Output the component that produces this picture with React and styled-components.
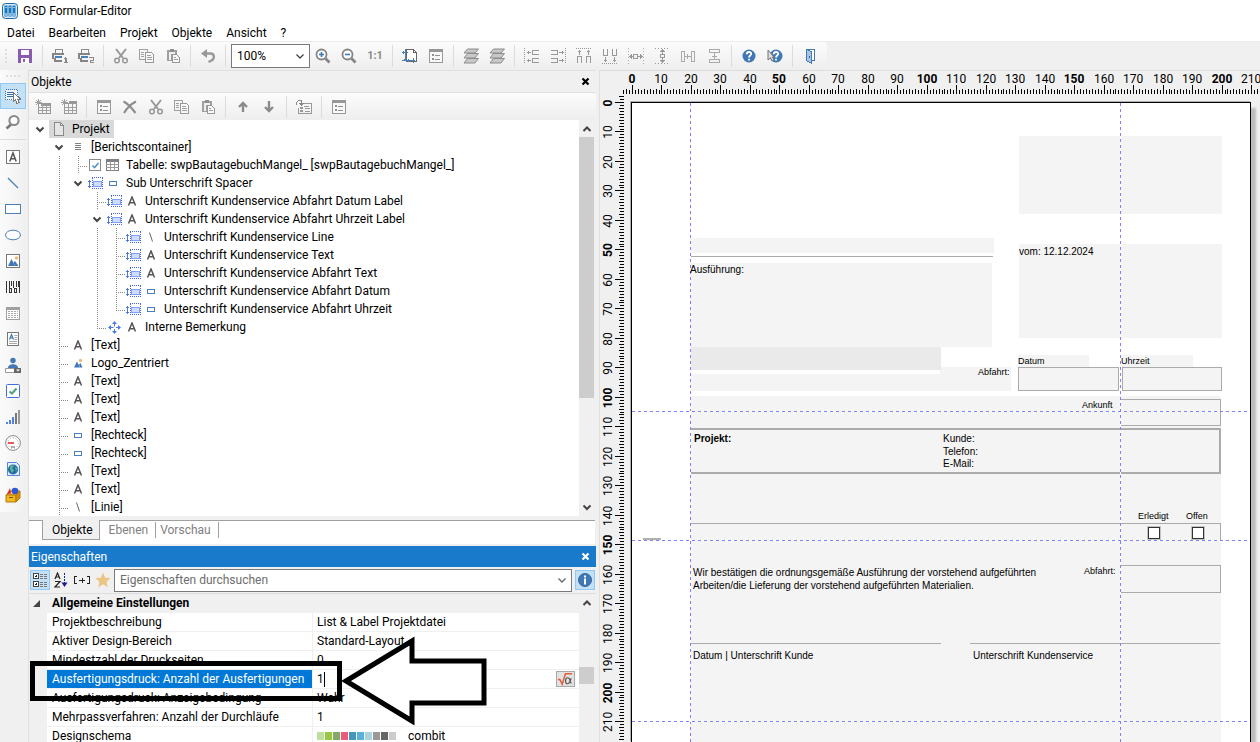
import React from 'react';
import styled, { createGlobalStyle } from 'styled-components';

const GlobalStyle = createGlobalStyle`
  * { box-sizing: border-box; }
  body {
    margin: 0;
    background: #f0f0f0;
    color: #000;
    font-family: "Segoe UI", Roboto, sans-serif;
    font-size: 12px;
    line-height: 18px;
  }
  button, input, select { font: inherit; color: inherit; }
`;

/* ---------- icons ---------- */

const Svg = ({ w = 16, h = 16, crisp = true, children }) => (
  <svg
    width={w}
    height={h}
    viewBox={`0 0 ${w} ${h}`}
    fill="none"
    shapeRendering={crisp ? 'crispEdges' : 'auto'}
    aria-hidden="true"
  >
    {children}
  </svg>
);

const Logo = () => (
  <Svg crisp={false}>
    <rect x=".5" y=".5" width="15" height="15" rx="3" fill="#d8ecf8" stroke="#1c6aa8" />
    <path d="M2.5 2.5h3v11h-3zM6.5 2.5h3v11h-3zM10.500 2.500h3v11h-3z" fill="#1676bd" />
    <path d="M4 4v1M8 4v1M12 4v1M4 10v3M8 10v3M12 10v3" stroke="#fff" />
  </Svg>
);
const Save = () => (
  <Svg>
    <path d="M1 1h14v14H1z" fill="#8a5bb0" />
    <path d="M4 2h8v5H4zM4 10h8v5H4z" fill="#fff" />
    <path d="M6 11h2v3H6z" fill="#8a5bb0" />
  </Svg>
);
const Printer = ({ n }) => (
  <Svg w={18}>
    <path d="M4.500 5V1.500h7V5" stroke="#8a8a8a" />
    <path d="M1 5h12v2H1zM1 7h2v4H1zM4 12h7v2H4zM3 10h2v4H3z" fill="#858585" />
    <path d="M4 8h7v2H4z" fill="#4a7fb8" />
    {n === 1 ? (
      <path d="M13 10h2v4M13 14.500h4M14.500 9v5" stroke="#8a8a8a" />
    ) : (
      <path d="M12 9.500h4v2.500H13.500v2.500H17" stroke="#8a8a8a" />
    )}
  </Svg>
);
const Cut = () => (
  <Svg crisp={false}>
    <path d="M3 1l7 9M13 1L6 10" stroke="#989898" strokeWidth="2" />
    <circle cx="4" cy="12.500" r="2.300" stroke="#989898" strokeWidth="1.500" />
    <circle cx="12" cy="12.500" r="2.300" stroke="#989898" strokeWidth="1.500" />
  </Svg>
);
const Copy = () => (
  <Svg>
    <path d="M6 11.500H.5V1.500h8V4" stroke="#a0a0a0" />
    <path d="M2 4.500h3M2 6.500h3M2 8.500h3" stroke="#a0a0a0" />
    <path d="M6.500 4.500h6l2 2v8h-8z" fill="#f8f8f8" stroke="#989898" />
    <path d="M8 7.500h4M8 9.500h5M8 11.500h5" stroke="#a0a0a0" />
  </Svg>
);
const Paste = () => (
  <Svg>
    <path d="M2 2h10v4H7v7H2z" fill="#a0a0a0" />
    <path d="M4 4h6v2H6v6H4z" fill="#f0f0f0" />
    <path d="M5 1h4v3H5z" fill="#909090" />
    <path d="M7.500 6.500h4l3 3v5h-7z" fill="#f8f8f8" stroke="#989898" />
    <path d="M9 9.500h2M9 11.500h4" stroke="#a0a0a0" />
  </Svg>
);
const Undo = () => (
  <Svg crisp={false}>
    <path d="M3 5.500h7.500c4 0 5 5.500 0 7.500l-2 1" stroke="#989898" strokeWidth="2.300" />
    <path d="M1 5.500L7 1v9z" fill="#989898" />
  </Svg>
);
const Magnify = ({ plus }) => (
  <Svg crisp={false}>
    <path d="M10.500 10.500L14.500 14.500" stroke="#858585" strokeWidth="2.800" />
    <circle cx="6.500" cy="6.500" r="5" fill="#fff" stroke="#858585" strokeWidth="1.800" />
    <path d="M4 6.500h5" stroke="#3f7ab8" strokeWidth="1.600" />
    {plus && <path d="M6.500 4v5" stroke="#3f7ab8" strokeWidth="1.600" />}
  </Svg>
);
const PageSize = () => (
  <Svg>
    <path d="M4.500 1.500h7l3 3v9h-10z" stroke="#666" fill="#fff" />
    <path d="M11.500 1.500v3h3" stroke="#666" />
    <path d="M0 4.500h6M3.500 1v12M1.500 3v3M0 12.500h13M11.500 10v5M6.500 11v3M2 11.500h3" stroke="#4a7fb8" />
  </Svg>
);
const Form = () => (
  <Svg>
    <path d="M1.500 1.500h13v13h-13z" fill="#f8f8f8" stroke="#989898" />
    <path d="M1 1h14v3H1z" fill="#989898" />
    <path d="M4 6h2v2H4zM4 10h2v2H4z" fill="#909090" />
    <path d="M7 7.500h5M7 11.500h5" stroke="#909090" />
  </Svg>
);
const Layers = () => (
  <Svg crisp={false}>
    <path d="M4.500 10.500h11L12 15H1zM4.500 5.500h11L12 10H1z" fill="#c8c8c8" stroke="#8c8c8c" />
    <path d="M4.500 1h11L12 5H1z" fill="#c8c8c8" stroke="#8c8c8c" />
  </Svg>
);
const dot = { stroke: '#999', strokeDasharray: '1 1' };
const AlignLeft = () => (
  <Svg>
    <path d="M.5 0v16" {...dot} />
    <path d="M15 2.500H8.500v4H15M15 10.500H8.500v4H15M3 4.500h4M3 12.500h4M4.500 3v3M4.500 11v3" stroke="#999" />
  </Svg>
);
const AlignRight = () => (
  <Svg>
    <path d="M15.500 0v16" {...dot} />
    <path d="M1 2.500h6.500v4H1M1 10.500h6.500v4H1M9 4.500h5M9 12.500h5M12.500 3v3M12.500 11v3" stroke="#999" />
  </Svg>
);
const AlignTop = () => (
  <Svg>
    <path d="M0 .5h16" {...dot} />
    <path d="M1.500 15V8.500h4V15M10.500 15V8.500h4V15M3.500 2v5M12.500 2v5M2 3.500h3M11 3.500h3" stroke="#999" />
  </Svg>
);
const AlignBottom = () => (
  <Svg>
    <path d="M0 15.500h16" {...dot} />
    <path d="M1.500 1v6.500h4V1M10.500 1v6.500h4V1M3.500 9v5M12.500 9v5M2 12.500h3M11 12.500h3" stroke="#999" />
  </Svg>
);
const SameWidth = () => (
  <Svg>
    <path d="M.5 0v16M15.500 0v16" stroke="#aaa" strokeDasharray="1 2" />
    <path d="M5.500 6.500h4v4h-4zM1 8.500h4M10 8.500h5M3.500 6v5M2.500 7v3M12.500 6v5M13.500 7v3" stroke="#999" />
  </Svg>
);
const SameHeight = () => (
  <Svg>
    <path d="M1 .5h14M1 15.500h14" stroke="#999" strokeDasharray="1 2" />
    <path d="M6.500 6.500h4v3h-4zM8.500 1v5M8.500 10v5M6 3.500h5M7 2.500h3M6 12.500h5M7 13.500h3" stroke="#999" />
  </Svg>
);
const SpaceH = () => (
  <Svg>
    <path d="M1.500 3.500h3v10h-3zM11.500 3.500h3v10h-3zM5 8.500h6M7.500 6v5" stroke="#aaa" />
  </Svg>
);
const SpaceV = () => (
  <Svg>
    <path d="M3.500 1.500h10v3h-10zM3.500 11.500h10v3h-10zM8.500 5v6M6 8.500h5" stroke="#aaa" />
  </Svg>
);
const Help = ({ pointer }) => (
  <Svg crisp={false}>
    <circle cx={pointer ? 9 : 8} cy="8" r="6.500" fill="#3f78b5" />
    <path
      transform={pointer ? 'translate(1 0)' : undefined}
      d="M5.800 6.200c0-3 4.600-2.800 4.400-.3C10.100 7.500 8 7.500 8 9.500M8 10.800v1.800"
      stroke="#fff"
      strokeWidth="1.800"
    />
    {pointer && <path d="M1 2v10l2.500-2.200L5 13l2-1-1.600-3H7z" fill="#ddd" stroke="#777" />}
  </Svg>
);
const Door = () => (
  <Svg>
    <path d="M4.500 1.500h8v11H10" stroke="#3f78b5" fill="#fff" />
    <path d="M4.500 1.500l5 2v12l-5-3z" fill="#a9c4e2" stroke="#3f78b5" />
    <path d="M7 8h1v2H7z" fill="#2d5f98" />
  </Svg>
);
const NewTable = ({ wide }) => (
  <Svg>
    <path d="M3.500 0v7M0 3.500h7M1 1l5 5M6 1L1 6" stroke="#a0a0a0" />
    <path d="M3 4.500h12v10H3z" fill="#f4f4f4" stroke="#989898" />
    <path d={wide ? 'M8 2h8v3H8z' : 'M6 4h9v3H6z'} fill="#989898" />
    <path d="M3 8.500h12M3 11.500h12M7.500 5v10M11.500 5v10" stroke="#a0a0a0" />
  </Svg>
);
const Delete = () => (
  <Svg crisp={false}>
    <path d="M1.500 2.500c4 2 8 6 12 11.500M14 2.500C9 5 5 9 2 14" stroke="#8e8e8e" strokeWidth="2.200" />
  </Svg>
);
const Arrow = ({ down }) => (
  <Svg crisp={false}>
    <path
      d={down ? 'M8 2v9M4 8l4 4 4-4' : 'M8 13V4M4 8l4-4 4 4'}
      stroke="#8a8a8a"
      strokeWidth="2.400"
    />
  </Svg>
);
const Jump = () => (
  <Svg>
    <path d="M7 4.500h8.500v10h-13V9" stroke="#999" />
    <path d="M.5 6V3.500l2-2h3v2M3 4h5M4 5h3M5 6h1" stroke="#888" />
    <path d="M4 8h3v2H4zM4 11h3v2H4z" fill="#999" />
    <path d="M8 7.500h5M9 9.500h5M9 12.500h5" stroke="#999" />
  </Svg>
);

/* palette */
const SelectTool = () => (
  <Svg>
    <path d="M.5 1.500h12v10H.5z" stroke="#3a70b0" strokeDasharray="1 1" fill="#eef5fc" />
    <path d="M2 4.500h7M2 6.500h6M2 8.500h6" stroke="#3a70b0" />
    <path d="M8.500 4.500v9l2-2 1.500 4 2-1-1.500-3.500h3z" fill="#fff" stroke="#777" />
  </Svg>
);
const Lens = () => (
  <Svg crisp={false}>
    <path d="M6 10.500L1.500 14.500" stroke="#777" strokeWidth="2.600" />
    <circle cx="9" cy="6.500" r="4.600" fill="#fff" stroke="#888" strokeWidth="2" />
  </Svg>
);
const TextTool = () => (
  <Svg crisp={false}>
    <rect x="1.500" y="1.500" width="13" height="13" fill="#fff" stroke="#777" />
    <path d="M4.800 12.500L8 4l3.200 8.500M6 9.800h4" stroke="#555" strokeWidth="1.500" />
  </Svg>
);
const LineTool = () => (
  <Svg crisp={false}>
    <path d="M3 3l10 10" stroke="#4a7fb8" strokeWidth="1.300" />
  </Svg>
);
const RectTool = () => (
  <Svg>
    <path d="M.5 3.500h15v9H.5z" stroke="#4a7fb8" fill="#fff" />
  </Svg>
);
const OvalTool = () => (
  <Svg crisp={false}>
    <ellipse cx="8" cy="8" rx="7.500" ry="4.800" stroke="#4a7fb8" fill="#fff" />
  </Svg>
);
const Mountains = () => (
  <>
    <path d="M3 13l3.500-7L10 13z" fill="#3f78b5" />
    <path d="M8.500 9.500L10 8l3.500 5H10z" fill="#3f78b5" />
    <circle cx="11.500" cy="5" r="1.800" fill="#efbb78" />
  </>
);
const ImageTool = () => (
  <Svg crisp={false}>
    <rect x="1.500" y="1.500" width="13" height="13" fill="#fff" stroke="#777" />
    <Mountains />
  </Svg>
);
const Barcode = () => (
  <Svg>
    <path d="M1.500 2v12M4 2v8M8.500 2v7M11.500 2v6M14.500 2v12" stroke="#333" />
    <path d="M6 2h1v5H6zM12.500 2h1v6h-1z" fill="#333" />
    <path d="M4.500 9.500h2v4h-2zM9.500 9.500h2v4h-2z" stroke="#333" />
  </Svg>
);
const TableTool = () => (
  <Svg>
    <path d="M1.500 2.500h13v12h-13z" fill="#fff" stroke="#a0a0a0" />
    <path d="M1 2h14v3H1z" fill="#a0a0a0" />
    <path d="M3 6.500h10M3 8.500h10M3 10.500h10M3 12.500h10" stroke="#aaa" strokeDasharray="2 1" />
  </Svg>
);
const RichText = () => (
  <Svg crisp={false}>
    <rect x="2.500" y="1.500" width="11" height="13" fill="#fff" stroke="#777" />
    <path d="M4.500 8.500L6.500 3.500l2 5M5.200 7h2.600" stroke="#3f78b5" strokeWidth="1.200" />
    <path d="M9.500 4.500h3M9.500 6.500h3M9.500 8.500h3M4 10.500h8M4 12.500h8" stroke="#aaa" />
  </Svg>
);
const FormTool = () => (
  <Svg crisp={false}>
    <circle cx="8" cy="3.500" r="2.700" fill="#3f78b5" />
    <path d="M3 11c0-5 10-5 10 0z" fill="#3f78b5" />
    <path d="M.5 11.500h9v4h-9z" fill="#fff" stroke="#999" />
    <path d="M9 11h7v5H9z" fill="#666" />
    <path d="M11 12.500h4l-2 2z" fill="#fff" />
  </Svg>
);
const CheckTool = () => (
  <Svg crisp={false}>
    <rect x="1.500" y="1.500" width="13" height="13" rx="1" fill="#fff" stroke="#3f70e8" />
    <path d="M4.500 8.500L7 10.500l4.500-5" stroke="#55a088" strokeWidth="2.200" />
  </Svg>
);
const Bars = () => (
  <Svg>
    <path d="M1 13h2v2H1zM4 11h2v4H4zM7 8h2v7H7z" fill="#4f7fe8" />
    <path d="M10 4h2v11h-2z" fill="#777" />
    <path d="M13 1h2v14h-2z" fill="#999" />
  </Svg>
);
const Gauge = () => (
  <Svg crisp={false}>
    <circle cx="8" cy="8" r="7.400" fill="#fff" stroke="#8a8a8a" />
    <circle cx="8" cy="8" r="5.300" stroke="#999" strokeDasharray="1 2" />
    <path d="M3 8h6" stroke="#e02020" strokeWidth="1.500" />
    <path d="M6 12h4" stroke="#666" />
  </Svg>
);
const Globe = () => (
  <Svg crisp={false}>
    <path d="M2.500 1.500h9l3 3v10h-12z" fill="#e4edff" stroke="#5585e0" />
    <circle cx="8" cy="8.500" r="5" fill="#2369a8" />
    <path d="M5 5.500c2-2 4-1 4 0L7 7l2 2-1.500 3C6 11 4.500 8.500 5 5.500zM10 6l2.500 1L11 11z" fill="#58b58e" />
  </Svg>
);
const Box3d = () => (
  <Svg crisp={false}>
    <path d="M1 8l4-4h10l-4 4z" fill="#f7d468" stroke="#b07a10" />
    <path d="M6 6.500L2 7l3-6z" fill="#e02828" />
    <circle cx="10" cy="4" r="3.300" fill="#2f55d8" />
    <path d="M1 8h10v7H1z" fill="#f2b81c" stroke="#b07a10" />
    <path d="M11 8l4-4v7l-4 4z" fill="#d4920c" stroke="#b07a10" />
    <path d="M4 10.500h4" stroke="#7a5200" />
  </Svg>
);

/* tree */
const DocIcon = () => (
  <Svg h={14}>
    <path d="M3.500.5h6l3 3v10h-9z" fill="#e6e6e6" stroke="#8a8a8a" />
    <path d="M9.500.5v3h3" stroke="#8a8a8a" />
  </Svg>
);
const ListIcon = () => (
  <Svg w={10} h={10}>
    <path d="M2 1.500h6M2 3.500h6M2 5.500h6M2 7.500h6" stroke="#808080" />
  </Svg>
);
const GridIcon = () => (
  <Svg w={13} h={12}>
    <path d="M.5.5h12v11H.5z" fill="#fff" stroke="#808080" />
    <path d="M0 0h13v3H0z" fill="#808080" />
    <path d="M0 5.500h13M0 8.500h13M4.500 2v10M8.500 2v10" stroke="#999" />
  </Svg>
);
const LetterIcon = () => (
  <Svg w={10} h={10} crisp={false}>
    <path d="M1.500 9.500L5 1l3.500 8.500M2.800 6.800h4.400" stroke="#555" strokeWidth="1.500" />
  </Svg>
);
const StrokeIcon = () => (
  <Svg w={10} h={10} crisp={false}>
    <path d="M3.500.5l3 9" stroke="#666" />
  </Svg>
);
const BoxIcon = () => (
  <Svg w={10} h={10}>
    <path d="M1.500 3.500h7v4h-7z" fill="#fff" stroke="#4a7fb8" />
  </Svg>
);
const PicIcon = () => (
  <Svg w={10} h={10} crisp={false}>
    <path d="M1 9.500L4 3.500l3 6z" fill="#3f78b5" />
    <path d="M6 6.500L7.500 5l2 4.500H7z" fill="#3f78b5" />
    <circle cx="7.500" cy="2.500" r="1.700" fill="#efbb78" />
  </Svg>
);
const LinkedIcon = () => (
  <Svg w={15} h={12}>
    <path d="M1.500 3v8M0 4.500h3M0 9.500h3" stroke="#4f78d8" />
    <path d="M4.500 1v10M14.500 1v10M4 .5h11M4 11.500h11" stroke="#4466ee" strokeDasharray="1 1" />
    <path d="M5.500 4.500h8v5h-8z" fill="#cfdcff" stroke="#7fa0f5" />
  </Svg>
);
const MoveIcon = () => (
  <Svg w={13} h={13} crisp={false}>
    <path d="M6.500 0L9 3H4zM6.500 13L4 10h5zM0 6.500L3 4v5zM13 6.500L10 9V4z" fill="#4f78e8" />
    <path d="M6.500 3v2.500M6.500 8v2.500M3 6.500h2.500M8 6.500h2.500" stroke="#4f78e8" />
  </Svg>
);

const Chevron = ({ color = '#444', up, thick = 2 }) => (
  <Svg w={10} h={8} crisp={false}>
    <path d={up ? 'M1.500 6L5 2.500 8.500 6' : 'M1.500 2.500L5 6l3.500-3.500'} stroke={color} strokeWidth={thick} />
  </Svg>
);
const Cross = ({ color }) => (
  <Svg w={9} h={9} crisp={false}>
    <path d="M1.500 1.500l6 6M7.500 1.500l-6 6" stroke={color} strokeWidth="2.200" />
  </Svg>
);

/* properties toolbar */
const Categories = () => (
  <Svg>
    <path d="M1.500 1.500h5v5h-5zM1.500 9.500h5v5h-5z" fill="#fff" stroke="#444" />
    <path d="M3 4h2M4 3v2M3 12h2M4 11v2" stroke="#222" />
    <path d="M8 2.500h3M12 2.500h3M8 4.500h3M12 4.500h3M8 6.500h3M12 6.500h3M8 10.500h3M12 10.500h3M8 12.500h3M12 12.500h3M8 14.500h3M12 14.500h3" stroke="#777" />
  </Svg>
);
const SortAz = () => (
  <Svg crisp={false}>
    <path d="M2 7l2.500-6L7 7M3 5h3M2 9.500h5l-5 5.500h5" stroke="#222" strokeWidth="1.200" />
    <path d="M11.500 1v12" stroke="#1c1c90" strokeDasharray="2 1" />
    <path d="M8.500 10.500h6l-3 4.500z" fill="#1c1c90" />
  </Svg>
);
const Expand = () => (
  <Svg>
    <path d="M3 4.500H.5v7H3M13 4.500h2.500v7H13M5 8.500h6M8.500 6v5" stroke="#222" />
  </Svg>
);
const Star = () => (
  <Svg crisp={false}>
    <path d="M8 .5l2.200 5.200 5.500.4-4.200 3.600 1.300 5.500L8 12.300l-4.800 2.900 1.300-5.500L.3 6.100l5.500-.4z" fill="#ecc483" />
  </Svg>
);
const Info = () => (
  <Svg crisp={false}>
    <circle cx="8" cy="8" r="6.500" fill="#3f78b5" stroke="#3568a0" />
    <path d="M8 3.500v2M8 6.500v6" stroke="#fff" strokeWidth="2" />
  </Svg>
);
const Formula = () => (
  <Svg w={18} crisp={false}>
    <path d="M1 8.500h2l2.500 5L9 2.500h7" stroke="#e0603a" strokeWidth="1.600" />
    <path d="M15 7c-2 8-6 7-6 3s4-5 5 .5c.2 1.500.8 2 1.500 2" stroke="#555" strokeWidth="1.200" />
  </Svg>
);

/* ---------- layout ---------- */

const Shell = styled.div`
  position: relative;
  display: flex;
  flex-direction: column;
  height: 100vh;
  overflow: hidden;
`;
const TitleBar = styled.header`
  display: flex;
  align-items: center;
  gap: 5px;
  height: 22px;
  padding-left: 2px;
  background: #fff;
`;
const MenuBar = styled.nav`
  display: flex;
  gap: 14px;
  height: 20px;
  padding: 2px 7px 0;
  background: #fff;
  border-bottom: 1px solid #ececec;
`;
const MenuLink = styled.a`
  color: #000;
  text-decoration: none;
`;
const Bar = styled.div`
  display: flex;
  align-items: center;
  align-self: flex-start;
  flex: none;
  height: 28px;
  padding-right: 4px;
  background: linear-gradient(#fcfcfc, #eeeeee);
  border-radius: 0 3px 3px 0;
`;
const ToolButton = styled.button`
  display: flex;
  align-items: center;
  justify-content: center;
  width: ${p => p.$w || 26}px;
  height: ${p => p.$h || 26}px;
  flex: none;
  padding: 0;
  border: 1px solid ${p => (p.$on ? '#90c8f6' : 'transparent')};
  background: ${p => (p.$on ? '#c4e0f5' : 'transparent')};
  color: #8a8a8a;
  font-weight: 700;
  font-size: 11px;
`;
const Divider = styled.span`
  width: ${p => (p.$flat ? '26px' : '1px')};
  height: ${p => (p.$flat ? '1px' : '22px')};
  margin: 4px ${p => (p.$flat ? '0' : '4px')};
  background: #dcdcdc;
  flex: none;
`;
const Grip = styled.span`
  width: ${p => (p.$flat ? 14 : 2)}px;
  height: ${p => (p.$flat ? 2 : 14)}px;
  margin: ${p => (p.$flat ? '5px 0 6px' : '0 5px')};
  background: repeating-linear-gradient(${p => (p.$flat ? '90deg' : '180deg')}, #dedede 0 2px, transparent 2px 4px);
`;
const SelectBox = styled.div`
  display: grid;
  align-items: center;
  width: 79px;
  height: 24px;
  margin-left: 1px;
  background: #fff;
  border: 1px solid #7a7a7a;
  > * { grid-area: 1 / 1; }
  > svg { justify-self: end; margin-right: 4px; pointer-events: none; }
`;
const ZoomSelect = styled.select`
  appearance: none;
  width: 100%;
  height: 100%;
  padding: 0 5px;
  border: 0;
  background: transparent;
`;
const Body = styled.main`
  display: flex;
  flex: 1;
  min-height: 0;
`;
const PaletteColumn = styled.div`
  width: 28px;
  flex: none;
`;
const Palette = styled.div`
  display: flex;
  flex-direction: column;
  align-items: center;
  padding: 0 2px 4px 0;
  background: linear-gradient(90deg, #fbfbfb, #efefef);
`;
const Dock = styled.aside`
  display: flex;
  flex-direction: column;
  width: 568px;
  flex: none;
  border-left: 1px solid #dfdfdf;
`;
const PanelTitle = styled.h2`
  display: flex;
  align-items: center;
  justify-content: space-between;
  flex: none;
  height: ${p => (p.$active ? 21 : 22)}px;
  margin: 0;
  padding: 0 1px 0 2px;
  font-size: 12px;
  font-weight: 400;
  color: ${p => (p.$active ? '#fff' : '#000')};
  background: ${p => (p.$active ? '#1979ca' : '#f0f0f0')};
  border-top: ${p => (p.$active ? 0 : 1)}px solid #e0e0e0;
`;
const PanelBar = styled(Bar)`
  align-self: stretch;
  padding-left: 1px;
  border-top: 1px solid #e0e0e0;
`;
const Scroller = styled.div`
  display: flex;
  min-height: 0;
  height: ${p => p.$h}px;
  flex: ${p => (p.$h ? 'none' : 1)};
  background: #fff;
`;
const Track = styled.div`
  display: flex;
  flex-direction: column;
  align-items: center;
  justify-content: space-between;
  width: 17px;
  flex: none;
  padding: 5px 0;
  border-right: 2px solid #f0f0f0;
  background: linear-gradient(#cdcdcd, #cdcdcd) 0 ${p => p.$at}px / 15px ${p => p.$size}px no-repeat #f0f0f0;
`;

/* tree */
const Tree = styled.ul`
  flex: 1;
  margin: 0;
  padding: 0;
  list-style: none;
  overflow: hidden;
`;
const TreeRow = styled.li`
  display: flex;
  align-items: stretch;
  height: 18px;
  padding-left: 1px;
  white-space: nowrap;
`;
const lines = {
  v: 'linear-gradient(#fff, #fff)',
  '|': 'repeating-linear-gradient(#888 0 1px, transparent 1px 2px) 10px 0 / 1px 18px no-repeat',
  L: 'repeating-linear-gradient(#888 0 1px, transparent 1px 2px) 10px 0 / 1px 10px no-repeat, repeating-linear-gradient(90deg, #888 0 1px, transparent 1px 2px) 10px 10px / 10px 1px no-repeat',
  t: 'repeating-linear-gradient(#888 0 1px, transparent 1px 2px) 10px 0 / 1px 18px no-repeat, repeating-linear-gradient(90deg, #888 0 1px, transparent 1px 2px) 10px 10px / 10px 1px no-repeat',
};
const Guide = styled.span`
  display: flex;
  align-items: center;
  justify-content: center;
  width: 19px;
  flex: none;
  background: ${p => lines[p.$kind] || 'none'};
`;
const IconCell = styled.span`
  display: flex;
  align-items: center;
  justify-content: center;
  width: ${p => (p.$lead ? 16 : 19)}px;
  flex: none;
  background: ${p => (p.$sel ? '#d9d9d9' : 'transparent')};
`;
const TreeLabel = styled.span`
  padding: 0 4px;
  background: ${p => (p.$sel ? '#d9d9d9' : 'transparent')};
`;
const TreeCheck = styled.input`
  appearance: none;
  width: 12px;
  height: 12px;
  margin: 0;
  border: 1px solid #8a8a8a;
  background: #fff;
`;
const CheckWrap = styled.span`
  display: grid;
  place-items: center;
  > * { grid-area: 1 / 1; }
  > svg { pointer-events: none; }
`;

/* tabs */
const Tabs = styled.div`
  display: flex;
  align-items: flex-start;
  flex: none;
  height: 24px;
  margin: 4px 1px 2px 0;
  padding-left: 13px;
  background: linear-gradient(#a0a0a0, #a0a0a0) 0 0 / 100% 1px no-repeat #fff;
`;
const Tab = styled.button`
  height: 20px;
  padding: 0 ${p => (p.$on ? 6 : 7)}px 0 ${p => (p.$on ? 9 : p.$last ? 4 : 9)}px;
  border: 0 solid #a0a0a0;
  border-width: ${p => (p.$on ? '0 1px 1px 1px' : '0')};
  background: ${p => (p.$on ? '#f0f0f0' : 'transparent')};
  color: ${p => (p.$on ? '#000' : '#808080')};
`;
const TabLine = styled.span`
  width: 1px;
  height: 16px;
  margin-top: 2px;
  background: #a0a0a0;
`;

/* properties */
const PropBar = styled.div`
  display: flex;
  align-items: center;
  flex: none;
  height: 27px;
  padding: 0 1px;
  gap: 1px;
  border-bottom: 1px solid #dedede;
`;
const SearchBox = styled.label`
  display: flex;
  align-items: center;
  flex: 1;
  height: 23px;
  margin-right: 2px;
  padding-right: 4px;
  background: #fff;
  border: 1px solid #7a7a7a;
`;
const SearchInput = styled.input`
  flex: 1;
  min-width: 0;
  padding: 0 5px;
  border: 0;
  outline: 0;
  background: transparent;
  &::placeholder { color: #6d6d6d; opacity: 1; }
`;
const PropArea = styled.div`
  flex: 1;
  min-width: 0;
  overflow: hidden;
`;
const PropTable = styled.table`
  width: 100%;
  border-collapse: separate;
  border-spacing: 0;
  table-layout: fixed;
  td, th {
    height: 19px;
    padding: 0 4px;
    border-bottom: 1px solid #f0f0f0;
    font-weight: 400;
    text-align: left;
    white-space: nowrap;
    line-height: 18px;
  }
`;
const GroupRow = styled.tr`
  background: #f0f0f0;
  && th { font-weight: 700; padding-left: 5px; }
`;
const Gutter = styled.td`
  background: #f0f0f0;
`;
const NameCell = styled.th`
  && { padding-left: 5px; }
  border-right: 1px solid #f0f0f0;
  background: ${p => (p.$sel ? '#0078d7' : 'transparent')};
  color: ${p => (p.$sel ? '#fff' : '#000')};
`;
const ValueLine = styled.div`
  display: flex;
  align-items: center;
  justify-content: ${p => (p.$spread ? 'space-between' : 'flex-start')};
  gap: 12px;
  height: 18px;
`;
const ValueInput = styled.input`
  width: 8px;
  padding: 0;
  border: 0;
  border-right: 1px solid #000;
  outline: 0;
  height: 15px;
`;
const FormulaButton = styled.button`
  display: flex;
  align-items: center;
  justify-content: center;
  width: 19px;
  height: 16px;
  padding: 0;
  border: 1px solid #a8a8a8;
  background: #e2e2e2;
`;
const Swatches = styled.span`
  display: flex;
  gap: 1px;
`;
const Swatch = styled.i`
  width: 7px;
  height: 8px;
  background: ${p => p.$c};
`;

/* designer */
const Designer = styled.section`
  display: grid;
  grid-template-columns: 31px minmax(0, 1fr);
  grid-template-rows: 25px minmax(0, 1fr);
  flex: 1;
  min-width: 0;
  margin-left: 3px;
  border: solid #dfdfdf;
  border-width: 1px 0 0 1px;
  overflow: hidden;
`;
const TopRuler = styled.div`
  grid-column: 1 / -1;
  overflow: hidden;
  svg { display: block; }
`;
const SideRuler = styled.div`
  overflow: hidden;
  svg { display: block; }
`;
const Canvas = styled.div`
  padding-top: 6px;
`;
const Sheet = styled.div`
  position: relative;
  width: 620px;
  height: 100%;
  background: #fff;
  border: solid #000;
  border-width: 1px 1px 0 1px;
  box-shadow: -1px -1px 0 #b0b0b0, 5px 6px 2px #bcbcbc;
  font-family: "Liberation Sans", Arial, sans-serif;
  font-size: 10px;
  line-height: 13px;
`;
const Block = styled.div`
  position: absolute;
  left: ${p => p.$x}px;
  top: ${p => p.$y}px;
  width: ${p => p.$w}px;
  height: ${p => p.$h}px;
  background: ${p => p.$bg || '#f4f4f4'};
`;
const Frame = styled(Block)`
  background: transparent;
  border: solid #ababab;
  border-width: ${p => p.$b || '1px'};
`;
const Caption = styled.span`
  position: absolute;
  left: ${p => p.$x}px;
  top: ${p => p.$y}px;
  font-weight: ${p => (p.$bold ? 700 : 400)};
  font-size: ${p => (p.$small ? 9 : 10)}px;
  white-space: nowrap;
`;
const PageCheck = styled.input`
  position: absolute;
  left: ${p => p.$x}px;
  top: 424px;
  appearance: none;
  width: 12px;
  height: 12px;
  margin: 0;
  border: 1px solid #333;
  outline: 1px solid #c4c4c4;
  background: #fff;
`;
const GuideV = styled.div`
  position: absolute;
  left: ${p => p.$x}px;
  top: 0;
  bottom: 0;
  width: 1px;
  background: repeating-linear-gradient(#8080ff 0 3px, #fff 3px 6px);
`;
const GuideH = styled.div`
  position: absolute;
  left: 0;
  right: 0;
  top: ${p => p.$y}px;
  height: 1px;
  background: repeating-linear-gradient(90deg, #8080ff 0 3px, #fff 3px 6px);
`;

/* markup drawn over the panel */
const MarkFrame = styled.div`
  position: absolute;
  left: 30px;
  top: 661px;
  width: 312px;
  height: 40px;
  border: 5px solid #000;
  pointer-events: none;
`;
const MarkArrow = styled.svg`
  position: absolute;
  left: 336px;
  top: 630px;
  pointer-events: none;
`;

/* ---------- data ---------- */

const mainTools = [
  ['Speichern', <Save />], null,
  ['Drucken 1', <Printer n={1} />], ['Drucken 2', <Printer n={2} />], null,
  ['Ausschneiden', <Cut />], ['Kopieren', <Copy />], ['Einfügen', <Paste />], null,
  ['Rückgängig', <Undo />], null,
];
const viewTools = [
  ['Vergrößern', <Magnify plus />], ['Verkleinern', <Magnify />], ['Originalgröße', '1:1'], null,
  ['Seitenlayout', <PageSize />], ['Eigenschaften', <Form />], null,
  ['Nach vorne', <Layers />], ['Nach hinten', <Layers />], null,
  ['Links ausrichten', <AlignLeft />], ['Rechts ausrichten', <AlignRight />],
  ['Oben ausrichten', <AlignTop />], ['Unten ausrichten', <AlignBottom />],
  ['Gleiche Breite', <SameWidth />], ['Gleiche Höhe', <SameHeight />],
  ['Horizontal verteilen', <SpaceH />], ['Vertikal verteilen', <SpaceV />], null,
  ['Hilfe', <Help />], ['Kontexthilfe', <Help pointer />], null,
  ['Beenden', <Door />],
];
const objectTools = [
  ['Neue Tabelle', <NewTable />], ['Neues Element', <NewTable wide />], null,
  ['Eigenschaften', <Form />], ['Löschen', <Delete />], ['Ausschneiden', <Cut />],
  ['Kopieren', <Copy />], ['Einfügen', <Paste />], null,
  ['Nach oben', <Arrow />], ['Nach unten', <Arrow down />], null,
  ['Gehe zu', <Jump />], null,
  ['Details', <Form />],
];
const paletteTools = [
  ['Auswahl', <SelectTool />, true], ['Lupe', <Lens />], null,
  ['Text', <TextTool />], ['Linie', <LineTool />], ['Rechteck', <RectTool />],
  ['Ellipse', <OvalTool />], ['Bild', <ImageTool />], ['Barcode', <Barcode />],
  ['Tabelle', <TableTool />], ['Formatierter Text', <RichText />], ['Formularelement', <FormTool />],
  ['Kontrollkästchen', <CheckTool />], ['Diagramm', <Bars />], ['Messinstrument', <Gauge />],
  ['HTML', <Globe />], ['OLE', <Box3d />],
];

const icons = {
  doc: DocIcon, list: ListIcon, grid: GridIcon, A: LetterIcon, line: StrokeIcon,
  box: BoxIcon, pic: PicIcon, linked: LinkedIcon, move: MoveIcon,
};
// guides: one character per tree level, see `lines`
const tree = [
  { guides: 'v', icon: 'doc', label: 'Projekt', sel: true },
  { guides: ' v', icon: 'list', label: '[Berichtscontainer]' },
  { guides: ' |t', lead: 'check', icon: 'grid', label: 'Tabelle: swpBautagebuchMangel_ [swpBautagebuchMangel_]' },
  { guides: ' |v', lead: 'linked', icon: 'box', label: 'Sub Unterschrift Spacer' },
  { guides: ' | t', lead: 'linked', icon: 'A', label: 'Unterschrift Kundenservice Abfahrt Datum Label' },
  { guides: ' | v', lead: 'linked', icon: 'A', label: 'Unterschrift Kundenservice Abfahrt Uhrzeit Label' },
  { guides: ' | |t', lead: 'linked', icon: 'line', label: 'Unterschrift Kundenservice Line' },
  { guides: ' | |t', lead: 'linked', icon: 'A', label: 'Unterschrift Kundenservice Text' },
  { guides: ' | |t', lead: 'linked', icon: 'A', label: 'Unterschrift Kundenservice Abfahrt Text' },
  { guides: ' | |t', lead: 'linked', icon: 'box', label: 'Unterschrift Kundenservice Abfahrt Datum' },
  { guides: ' | |L', lead: 'linked', icon: 'box', label: 'Unterschrift Kundenservice Abfahrt Uhrzeit' },
  { guides: ' | L', lead: 'move', icon: 'A', label: 'Interne Bemerkung' },
  { guides: ' t', icon: 'A', label: '[Text]' },
  { guides: ' t', icon: 'pic', label: 'Logo_Zentriert' },
  { guides: ' t', icon: 'A', label: '[Text]' },
  { guides: ' t', icon: 'A', label: '[Text]' },
  { guides: ' t', icon: 'A', label: '[Text]' },
  { guides: ' t', icon: 'box', label: '[Rechteck]' },
  { guides: ' t', icon: 'box', label: '[Rechteck]' },
  { guides: ' t', icon: 'A', label: '[Text]' },
  { guides: ' t', icon: 'A', label: '[Text]' },
  { guides: ' t', icon: 'line', label: '[Linie]' },
];

const scheme = ['#bedda0', '#96c840', '#86a868', '#ea5b7c', '#4596b8', '#5ab0d8', '#a8d4e2', '#999', '#666', '#ccc'];
const props = [
  ['Projektbeschreibung', 'List & Label Projektdatei'],
  ['Aktiver Design-Bereich', 'Standard-Layout'],
  ['Mindestzahl der Druckseiten', '0'],
  ['Ausfertigungsdruck: Anzahl der Ausfertigungen', '1', 'edit'],
  ['Ausfertigungsdruck: Anzeigebedingung', 'Wahr'],
  ['Mehrpassverfahren: Anzahl der Durchläufe', '1'],
  ['Designschema', 'combit', 'scheme'],
];

/* ---------- parts ---------- */

const Tools = ({ items, flat, h }) =>
  items.map((t, i) =>
    t ? (
      <ToolButton key={i} aria-label={t[0]} $on={t[2]} $h={h}>{t[1]}</ToolButton>
    ) : (
      <Divider key={i} $flat={flat} />
    )
  );

// pixels per millimetre on both rulers
const SCALE = 2.948;

const Ruler = ({ vertical }) => {
  const origin = vertical ? 6 : 32;
  const marks = [];
  for (let mm = vertical ? -2 : -3; mm <= 218; mm++) {
    const at = Math.round(origin + mm * SCALE) + 0.5;
    const len = mm % 10 === 0 ? 9 : mm % 2 === 0 ? 5 : 4;
    marks.push(vertical ? `M${24 - len} ${at}H24` : `M${at} ${23 - len}V23`);
  }
  const labels = [];
  for (let mm = 0; mm <= 210; mm += 10) {
    const at = Math.round(origin + mm * SCALE);
    labels.push(
      <text
        key={mm}
        fontSize="12"
        fontWeight={mm % 50 === 0 ? 700 : 400}
        textAnchor="middle"
        transform={vertical ? `translate(12 ${at + 1}) rotate(-90)` : `translate(${at} 12)`}
      >
        {mm}
      </text>
    );
  }
  return (
    <svg width={vertical ? 30 : 700} height={vertical ? 660 : 25}>
      <path d={marks.join('')} stroke="#000" shapeRendering="crispEdges" />
      {labels}
    </svg>
  );
};

const TreeItem = ({ item }) => {
  const Icon = icons[item.icon];
  const Lead = icons[item.lead];
  return (
    <TreeRow>
      {[...item.guides].map((g, i) => (
        <Guide key={i} $kind={g}>{g === 'v' && <Chevron />}</Guide>
      ))}
      {item.lead === 'check' && (
        <IconCell $lead>
          <CheckWrap>
            <TreeCheck type="checkbox" defaultChecked aria-label={item.label} />
            <Svg w={9} h={9} crisp={false}>
              <path d="M1.500 4.500l2 2.200L7.500 2" stroke="#4a90c8" strokeWidth="1.500" />
            </Svg>
          </CheckWrap>
        </IconCell>
      )}
      {Lead && <IconCell $lead><Lead /></IconCell>}
      <IconCell $sel={item.sel}><Icon /></IconCell>
      <TreeLabel $sel={item.sel}>{item.label}</TreeLabel>
    </TreeRow>
  );
};

const PropValue = ({ name, value, kind }) => {
  if (kind === 'edit') {
    return (
      <ValueLine $spread>
        <ValueInput defaultValue={value} aria-label={name} />
        <FormulaButton aria-label="Formel"><Formula /></FormulaButton>
      </ValueLine>
    );
  }
  if (kind === 'scheme') {
    return (
      <ValueLine>
        <Swatches>{scheme.map(c => <Swatch key={c} $c={c} />)}</Swatches>
        {value}
      </ValueLine>
    );
  }
  return value;
};

const ObjectsPanel = () => (
  <>
    <PanelTitle>
      Objekte
      <ToolButton $w={20} $h={18} aria-label="Schließen"><Cross color="#000" /></ToolButton>
    </PanelTitle>
    <PanelBar><Tools items={objectTools} /></PanelBar>
    <Scroller $h={396}>
      <Tree>{tree.map((item, i) => <TreeItem key={i} item={item} />)}</Tree>
      <Track $at={17} $size={261}>
        <Chevron up />
        <Chevron />
      </Track>
    </Scroller>
    <Tabs>
      <Tab $on>Objekte</Tab>
      <Tab>Ebenen</Tab>
      <TabLine />
      <Tab $last>Vorschau</Tab>
      <TabLine />
    </Tabs>
  </>
);

const PropertiesPanel = () => (
  <>
    <PanelTitle $active>
      Eigenschaften
      <ToolButton $w={20} $h={18} aria-label="Schließen"><Cross color="#fff" /></ToolButton>
    </PanelTitle>
    <PropBar>
      <ToolButton $on $w={20} $h={20} aria-label="Kategorien"><Categories /></ToolButton>
      <ToolButton $w={20} $h={20} aria-label="Sortieren"><SortAz /></ToolButton>
      <ToolButton $w={20} $h={20} aria-label="Aufklappen"><Expand /></ToolButton>
      <ToolButton $w={20} $h={20} aria-label="Favoriten"><Star /></ToolButton>
      <SearchBox>
        <SearchInput placeholder="Eigenschaften durchsuchen" aria-label="Eigenschaften durchsuchen" />
        <Chevron color="#666" thick={1.3} />
      </SearchBox>
      <ToolButton $on $w={20} $h={20} aria-label="Info"><Info /></ToolButton>
    </PropBar>
    <Scroller>
      <PropArea>
        <PropTable>
          <colgroup>
            <col width="18" />
            <col width="266" />
            <col />
          </colgroup>
          <tbody>
            <GroupRow>
              <Gutter>
                <Svg w={7} h={7} crisp={false}><path d="M7 0v7H0z" fill="#444" /></Svg>
              </Gutter>
              <th colSpan="2">Allgemeine Einstellungen</th>
            </GroupRow>
            {props.map(([name, value, kind]) => (
              <tr key={name}>
                <Gutter />
                <NameCell scope="row" $sel={kind === 'edit'}>{name}</NameCell>
                <td><PropValue name={name} value={value} kind={kind} /></td>
              </tr>
            ))}
          </tbody>
        </PropTable>
      </PropArea>
      <Track $at={73} $size={17}>
        <Chevron up />
      </Track>
    </Scroller>
  </>
);

const FormPage = () => (
  <Sheet>
    <Block $x={387} $y={33} $w={203} $h={78} />
    <Block $x={387} $y={141} $w={203} $h={94} />
    <Block $x={59} $y={135} $w={303} $h={15} />
    <Block $x={59} $y={153} $w={302} $h={1} $bg="#ababab" />
    <Block $x={59} $y={160} $w={301} $h={84} />
    <Block $x={59} $y={271} $w={249} $h={17} />
    <Block $x={308} $y={264} $w={71} $h={24} />
    <Block $x={59} $y={244} $w={250} $h={23} $bg="#eaeaea" />
    <Block $x={386} $y={252} $w={71} $h={12} />
    <Block $x={490} $y={252} $w={71} $h={12} />
    <Block $x={386} $y={264} $w={101} $h={24} />
    <Block $x={490} $y={264} $w={100} $h={24} />
    <Frame $x={386} $y={264} $w={101} $h={24} />
    <Frame $x={490} $y={264} $w={100} $h={24} />
    <Block $x={59} $y={293} $w={530} $h={360} />
    <Frame $x={489} $y={296} $w={100} $h={27} $b="1px 1px 1px 0" />
    <Frame $x={59} $y={325} $w={530} $h={46} $b="2px 2px 2px 0" />
    <Frame $x={59} $y={420} $w={530} $h={17} $b="1px 1px 0 0" />
    <Frame $x={489} $y={462} $w={100} $h={28} $b="1px 1px 1px 0" />
    <Block $x={59} $y={540} $w={250} $h={1} $bg="#ababab" />
    <Block $x={338} $y={540} $w={250} $h={1} $bg="#ababab" />
    <Block $x={11} $y={435} $w={18} $h={2} $bg="#b0b0b0" />

    <GuideV $x={58} />
    <GuideV $x={488} />
    <GuideH $y={308} />
    <GuideH $y={437} />
    <GuideH $y={618} />

    <Caption $x={387} $y={142}>vom: 12.12.2024</Caption>
    <Caption $x={58} $y={160}>Ausführung:</Caption>
    <Caption $x={386} $y={252} $small>Datum</Caption>
    <Caption $x={489} $y={252} $small>Uhrzeit</Caption>
    <Caption $x={346} $y={263} $small>Abfahrt:</Caption>
    <Caption $x={450} $y={296} $small>Ankunft</Caption>
    <Caption $x={62} $y={329} $bold>Projekt:</Caption>
    <Caption $x={311} $y={329}>Kunde:</Caption>
    <Caption $x={311} $y={342}>Telefon:</Caption>
    <Caption $x={311} $y={354}>E-Mail:</Caption>
    <Caption $x={506} $y={407} $small>Erledigt</Caption>
    <Caption $x={554} $y={407} $small>Offen</Caption>
    <PageCheck type="checkbox" $x={516} aria-label="Erledigt" />
    <PageCheck type="checkbox" $x={560} aria-label="Offen" />
    <Caption $x={61} $y={463}>
      Wir bestätigen die ordnungsgemäße Ausführung der vorstehend aufgeführten
      <br />
      Arbeiten/die Lieferung der vorstehend aufgeführten Materialien.
    </Caption>
    <Caption $x={452} $y={462} $small>Abfahrt:</Caption>
    <Caption $x={61} $y={546}>Datum | Unterschrift Kunde</Caption>
    <Caption $x={341} $y={546}>Unterschrift Kundenservice</Caption>
  </Sheet>
);

export default function App() {
  return (
    <Shell>
      <GlobalStyle />
      <TitleBar><Logo />GSD Formular-Editor</TitleBar>
      <MenuBar>
        {['Datei', 'Bearbeiten', 'Projekt', 'Objekte', 'Ansicht', '?'].map(m => (
          <MenuLink key={m} href="#">{m}</MenuLink>
        ))}
      </MenuBar>
      <Bar>
        <Grip />
        <Tools items={mainTools} />
        <SelectBox>
          <ZoomSelect aria-label="Zoom" defaultValue="100%"><option>100%</option></ZoomSelect>
          <Chevron thick={1.3} />
        </SelectBox>
        <Tools items={viewTools} />
      </Bar>
      <Body>
        <PaletteColumn>
          <Palette>
            <Grip $flat />
            <Tools items={paletteTools} flat />
          </Palette>
        </PaletteColumn>
        <Dock>
          <ObjectsPanel />
          <PropertiesPanel />
        </Dock>
        <Designer>
          <TopRuler><Ruler /></TopRuler>
          <SideRuler><Ruler vertical /></SideRuler>
          <Canvas><FormPage /></Canvas>
        </Designer>
      </Body>
      <MarkFrame />
      <MarkArrow width="156" height="100">
        <path d="M10 51L76 11v20h72v42H76v18z" fill="#fff" stroke="#000" strokeWidth="5" />
      </MarkArrow>
    </Shell>
  );
}
